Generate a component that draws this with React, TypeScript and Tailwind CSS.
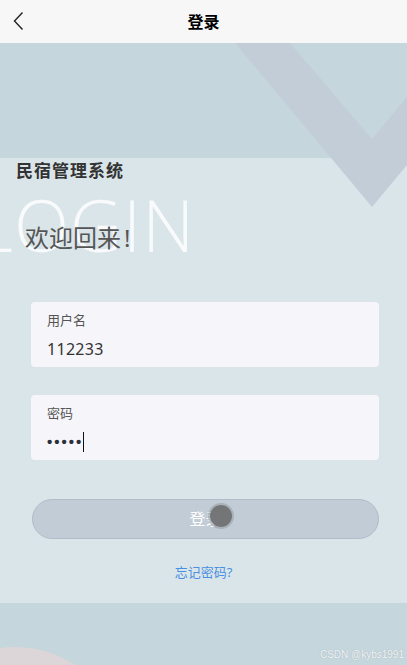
import React from "react";

const font = { fontFamily: '"Noto Sans", "Noto Sans CJK SC", sans-serif' };

const Header = () => (
  <div className="relative h-[43px] bg-[#f7f7f7] flex items-center justify-center">
    <button className="absolute left-[10px] top-[10px] w-[16px] h-[22px] flex items-center justify-center">
      <svg width="12" height="20" viewBox="0 0 12 20" fill="none">
        <path d="M10.5 1.5 L2.5 10 L10.5 18.5" stroke="#222" strokeWidth="1.4" />
      </svg>
    </button>
    <div className="text-[16px] font-bold text-black leading-6">登录</div>
  </div>
);

interface FieldProps {
  label: string;
  children: React.ReactNode;
}
const Field = (props: FieldProps) => {
  const { label, children } = props;
  return (
    <div className="ml-[31px] mr-[28px] h-[65px] rounded-[4px] bg-[#f5f5fa] px-[16px] pt-[8px]">
      <div className="text-[13px] leading-5 text-[#555]">{label}</div>
      <div className="mt-[7px] h-6 flex items-center">{children}</div>
    </div>
  );
};

export default function App() {
  return (
    <div className="w-[407px] h-[665px] overflow-hidden" style={font}>
      <Header />
      <div className="relative">
        <div className="h-[115px] bg-[#c5d6dd]" />
        <div className="h-[445px] bg-[#dae5e9] flex flex-col">
          <div className="pl-[16px] pt-px text-[17px] leading-6 font-bold text-[#333] tracking-[1px]">
            民宿管理系统
          </div>
          <div className="relative h-[71px]">
            <div
              className="absolute left-[-24px] top-[5px] text-[72px] leading-none font-light text-white/80 tracking-[1px]"
              style={{ fontFamily: '"Open Sans", sans-serif' }}
            >
              LOGIN
            </div>
            <div className="relative pl-[25px] pt-[39px] text-[24px] leading-8 text-[#555]">
              欢迎回来<span className="ml-[3px]">!</span>
            </div>
          </div>
          <div className="mt-[48px] flex flex-col gap-[28px]">
            <Field label="用户名">
              <span className="text-[16px] text-[#333] tracking-[0.3px]">112233</span>
            </Field>
            <Field label="密码">
              <span
                className="text-[15px] font-bold text-[#2a2f3a] tracking-[2px]"
                style={{ fontFamily: '"Liberation Sans", sans-serif' }}
              >
                •••••
              </span>
              <span className="w-px h-[20px] bg-[#111]" />
            </Field>
          </div>
          <div className="relative mt-[39px] ml-[32px] mr-[28px] h-[40px] rounded-full bg-[#c2ccd6] border border-[#b3bdc8] flex items-center justify-center">
            <span className="text-[16px] text-white">登录</span>
            <span className="absolute left-[177px] top-[5px] w-[22px] h-[22px] rounded-full bg-[#6f7072]/95 ring-2 ring-[#9a9ea4]/60" />
          </div>
          <div className="mt-[23px] text-center text-[13px] leading-5 text-[#4a90e2]">忘记密码?</div>
        </div>
        <div className="relative h-[62px] bg-[#c5d6dd] overflow-hidden">
          <div className="absolute left-[-94px] top-[44px] w-[218px] h-[218px] rounded-full bg-[#dcd6d8]" />
          <div
            className="absolute right-[3px] top-[44px] text-[10px] leading-4 text-white/90"
            style={{ fontFamily: '"Liberation Sans", sans-serif', textShadow: "0 0 1px #8a9aa3" }}
          >
            CSDN @kybs1991
          </div>
        </div>
        <svg className="absolute left-0 top-0" width="407" height="170" viewBox="0 0 407 170">
          <polygon points="235,0 290,0 372,96 407,54 407,122 372,164" fill="#c3cdd8" />
        </svg>
      </div>
    </div>
  );
}
